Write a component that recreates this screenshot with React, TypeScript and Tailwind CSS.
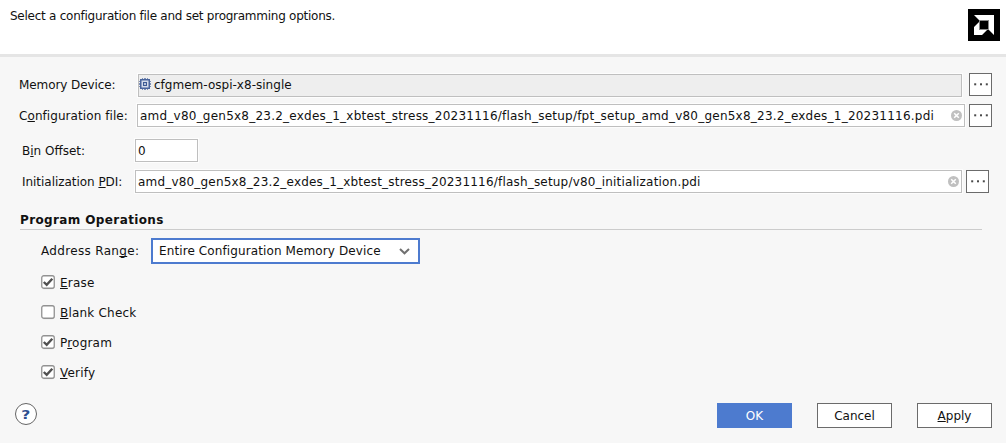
import React from "react";

function Key({ children }: { children: React.ReactNode }) {
  return (
    <span className="underline decoration-1 underline-offset-1 [text-decoration-skip-ink:none]">
      {children}
    </span>
  );
}

function MoreButton() {
  return (
    <button className="flex h-[23px] w-[23px] shrink-0 items-center justify-center border border-[#6b6b6b] bg-white">
      <svg width="15" height="3" viewBox="0 0 15 3" fill="#4a4a4a">
        <rect x="1.2" y="0.3" width="2" height="2" />
        <rect x="7" y="0.3" width="2" height="2" />
        <rect x="12.8" y="0.3" width="2" height="2" />
      </svg>
    </button>
  );
}

function ClearIcon() {
  return (
    <svg className="-mt-[2px] ml-auto shrink-0" width="11" height="11" viewBox="0 0 11 11">
      <circle cx="5.5" cy="5.5" r="5.5" fill="#c0c0c0" />
      <path d="M3.2 3.2 7.8 7.8M7.8 3.2 3.2 7.8" stroke="#fff" strokeWidth="1.5" />
    </svg>
  );
}

function ChipIcon() {
  return (
    <svg className="-mt-[5px] shrink-0" width="12" height="12" viewBox="0 0 12 12">
      <path
        d="M3.5 0v12M5.5 0v12M6.5 0v12M8.5 0v12M0 3.5h12M0 5.5h12M0 6.5h12M0 8.5h12"
        stroke="#7d8fb5"
        strokeWidth="1"
      />
      <rect x="1.75" y="1.75" width="8.5" height="8.5" fill="#d5dcea" stroke="#4a659c" strokeWidth="1.5" />
      <rect x="4.5" y="4.5" width="3" height="3" fill="#b8c3da" stroke="#3d5a94" />
    </svg>
  );
}

function Logo() {
  return (
    <svg width="32" height="32" viewBox="0 0 32 32">
      <rect width="32" height="32" fill="#000" />
      <path d="M6 6H26V26L20.5 20.5V11.5H11.5Z" fill="#fff" />
      <path d="M11.5 12.5V20.5H19.5L14 26H6V18Z" fill="#fff" />
      <rect x="11.5" y="11.5" width="9" height="9" fill="none" stroke="#8a8a8a" />
    </svg>
  );
}

function Check({ checked, children }: { checked: boolean; children: React.ReactNode }) {
  return (
    <label className="flex h-[30px] items-center">
      <svg width="14" height="15" viewBox="0 0 14 15">
        <rect x="0.75" y="1.5" width="12.5" height="12.8" rx="2" fill="#d9d9d9" />
        <rect x="0.75" y="0.75" width="12.5" height="12.5" rx="2" fill="#fff" stroke="#929292" strokeWidth="1.3" />
        {checked && <path d="M2.8 7 5.7 9.8 11.3 3.7" fill="none" stroke="#505050" strokeWidth="2.4" />}
      </svg>
      <span className="ml-[5px] pt-[3px] tracking-[0.2px]">{children}</span>
    </label>
  );
}

const field =
  "flex h-[23px] shrink-0 items-center border border-[#bfbfbf] pt-[2px] shadow-[0_0_0_1px_#fdfdfd]";
const action = "h-[25px] w-[75px] border pt-[2px]";

export default function App() {
  return (
    <div className="flex h-[443px] w-[1006px] flex-col overflow-hidden whitespace-pre bg-[#f7f7f7] font-['DejaVu_Sans',sans-serif] text-[12px] leading-[15px] text-[#111]">
      <header className="flex h-[57px] shrink-0 justify-between border-b-3 border-[#e5e5e5] bg-white pt-[9px] pr-[6px] pl-[10px]">
        <span className="tracking-[-0.255px]">Select a configuration file and set programming options.</span>
        <Logo />
      </header>

      <div className="mt-4 flex h-6 items-start pl-[19px]">
        <span className="mt-[5px] w-[119px] shrink-0 tracking-[-0.08px]">Memory Device:</span>
        <div className={`${field} mt-px w-[824px] bg-[#eeeeee]`}>
          <ChipIcon />
          <span className="-mt-[2px] ml-[3px] tracking-[0.02px]">cfgmem-ospi-x8-single</span>
        </div>
        <div className="ml-[7px]">
          <MoreButton />
        </div>
      </div>

      <div className="mt-[7px] flex h-[23px] items-center pl-[19px]">
        <span className="w-[118px] shrink-0 pt-[2px] tracking-[0.07px]">
          C<Key>o</Key>nfiguration file:
        </span>
        <div className={`${field} w-[828px] bg-white pr-[2px] pl-[2px]`}>
          <span className="tracking-[0.23px]">amd_v80_gen5x8_23.2_exdes_1_xbtest_stress_20231116/flash_setup/fpt_setup_amd_v80_gen5x8_23.2_exdes_1_20231116.pdi</span>
          <ClearIcon />
        </div>
        <div className="ml-1">
          <MoreButton />
        </div>
      </div>

      <div className="mt-3 flex h-[23px] items-center pl-[22px]">
        <span className="w-[113px] shrink-0 pt-[2px]">
          B<Key>i</Key>n Offset:
        </span>
        <div className={`${field} w-[63px] bg-white pl-[2px]`}>0</div>
      </div>

      <div className="mt-2 flex h-[23px] items-center pl-[22px]">
        <span className="w-[113px] shrink-0 pt-[2px] tracking-[-0.04px]">
          Initialization <Key>P</Key>DI:
        </span>
        <div className={`${field} w-[827px] bg-white pr-[2px] pl-[2px]`}>
          <span className="tracking-[0.19px]">amd_v80_gen5x8_23.2_exdes_1_xbtest_stress_20231116/flash_setup/v80_initialization.pdi</span>
          <ClearIcon />
        </div>
        <div className="ml-1">
          <MoreButton />
        </div>
      </div>

      <h2 className="mt-[19px] ml-5 h-[18px] w-[962px] border-b border-[#cccccc] pt-px font-bold tracking-[0.38px]">
        Program Operations
      </h2>

      <div className="mt-2 flex h-[26px] items-center pl-[41px]">
        <span className="w-[110px] tracking-[0.33px]">
          Address Ran<Key>g</Key>e:
        </span>
        <div className="flex h-[26px] w-[269px] items-center justify-between border-2 border-[#4d7bcf] bg-white pr-2 pl-[6px]">
          <span className="tracking-[0.11px]">Entire Configuration Memory Device</span>
          <svg width="11" height="7" viewBox="0 0 11 7">
            <path d="M1 1 5.5 5.3 10 1" fill="none" stroke="#707070" strokeWidth="2" />
          </svg>
        </div>
      </div>

      <div className="mt-[3px] pl-[41px]">
        <Check checked>
          <Key>E</Key>rase
        </Check>
        <Check checked={false}>
          <Key>B</Key>lank Check
        </Check>
        <Check checked>
          P<Key>r</Key>ogram
        </Check>
        <Check checked>
          <Key>V</Key>erify
        </Check>
      </div>

      <footer className="mt-4 flex items-start justify-between pr-[14px] pl-[15px]">
        <button className="flex h-[22px] w-[22px] items-center justify-center rounded-full border border-[#666] bg-white text-[13px] font-bold text-[#2f4f8f]">
          <span className="scale-x-120">?</span>
        </button>
        <div className="flex gap-[25px]">
          <button className={`${action} border-[#4d7bcf] bg-[#4d7bcf] text-white`}>OK</button>
          <button className={`${action} border-[#6b6b6b] bg-white`}>Cancel</button>
          <button className={`${action} border-[#6b6b6b] bg-white`}>
            <Key>A</Key>pply
          </button>
        </div>
      </footer>
    </div>
  );
}
